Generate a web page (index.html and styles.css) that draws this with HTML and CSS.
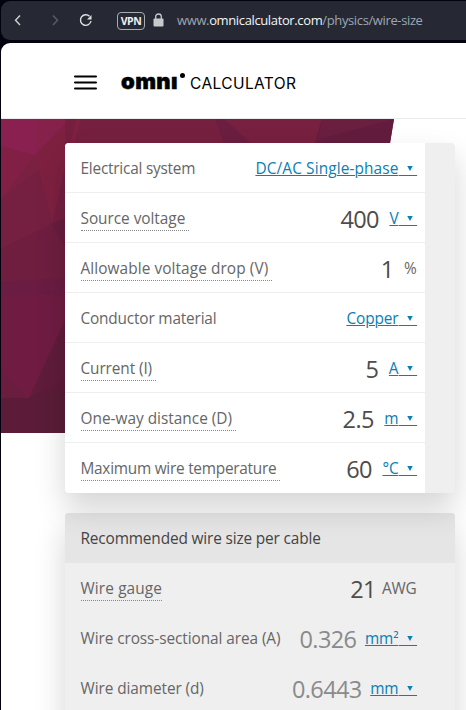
FILE: index.html
```
<!DOCTYPE html>
<html lang="en">
<head>
<meta charset="utf-8">
<title>Wire Size Calculator</title>
<link rel="stylesheet" href="styles.css">
</head>
<body>
<svg class="defs" width="0" height="0"><symbol id="caret" viewBox="0 0 18 10"><path d="M8 -.5h6L11 5z"/><path d="M0 9h18v1H0z"/></symbol></svg>
<div class="toolbar">
  <svg class="nav" width="100" height="39" viewBox="0 0 100 39" fill="none">
    <path d="M19 14.500l-4.500 4.800 4.500 4.800" stroke="#d0d1d4" stroke-width="1.400"/>
    <path d="M52 14.500l4.500 4.800-4.500 4.800" stroke="#5b5d67" stroke-width="1.400"/>
    <path d="M88.500 15.300a5.300 5.300 0 1 0 1.500 4.700" stroke="#e0e1e3" stroke-width="1.400"/>
    <path d="M90.500 14v4.500H86z" fill="#e0e1e3"/>
  </svg>
  <span class="vpn">VPN</span>
  <svg class="lock" width="11" height="14" viewBox="0 0 11 14"><path d="M2.700 6V3.800a2.800 2.800 0 0 1 5.600 0V6" fill="none" stroke="#c6cacd" stroke-width="1.300"/><rect x=".5" y="5.500" width="10" height="8" rx="1" fill="#c6cacd"/></svg>
  <span class="url">www.<b>omnicalculator.com</b>/physics/wire-size</span>
</div>
<div class="page">
  <header class="header">
    <svg class="menu" width="23" height="15" viewBox="0 0 23 15"><path d="M1 1.500h21M1 7.500h21M1 13.500h21" stroke="#000" stroke-width="2" stroke-linecap="round"/></svg>
    <span class="omni">omnı</span><i class="dot"></i><span class="calc">CALCULATOR</span>
  </header>
  <main class="main">
    <svg class="hero" width="394" height="314" viewBox="0 0 394 314">
      <path fill="#741e40" d="M0 0H393L341 314H0z"/>
      <path fill="#812044" d="M0 0H80L52 108 0 80z"/>
      <path fill="#8a204f" d="M0 0H36L34 36 0 27z"/>
      <path fill="#86214b" d="M36 0H68L34 36z"/>
      <path fill="#7a2041" d="M34 36L0 80V130L50 104z"/>
      <path fill="#7e2040" d="M34 36L70 0H80L51 105z"/>
      <path fill="#762041" d="M0 80L38 50 51 105 0 130z"/>
      <path fill="#6f1e40" d="M0 130L51 105 64 120V159L0 163z"/>
      <path fill="#741e40" d="M75 0L51 105 64 99V0z"/>
      <path fill="#681d3e" d="M51 105L64 99V128z"/>
      <path fill="#6a1c42" d="M0 163L64 159V200H0z"/>
      <path fill="#701c42" d="M0 176H64V201L28 279 0 251z"/>
      <path fill="#6a1d3f" d="M0 251L28 279H0z"/>
      <path fill="#5f1c3b" d="M64 201V258L28 279z"/>
      <path fill="#5d1b3a" d="M0 279H28L64 258V314H0z"/>
      <path fill="#5a1c38" d="M28 279L64 267V314H28z"/>
      <path fill="#6b1e3f" d="M214 0H321L316 24H223z"/>
      <path fill="#75203f" d="M80 0H214L223 24H75z"/>
      <path fill="#77203f" d="M223 0H321L316 24H250z"/>
      <path fill="#631c3e" d="M321 0H393L389 24H314z"/>
      <path fill="#6a1e40" d="M321 0H393L316 21z"/>
    </svg>
    <section class="card inputs">
      <div class="rows">
        <div class="row"><span class="label">Electrical system</span><a class="unit sys">DC/AC Single-phase<svg class="caret"><use href="#caret"/></svg></a></div>
        <div class="row"><span class="label tip">Source voltage</span><span class="num">400</span><a class="unit">V<svg class="caret"><use href="#caret"/></svg></a></div>
        <div class="row"><span class="label tip">Allowable voltage drop (V)</span><span class="num wide">1</span><span class="plain">%</span></div>
        <div class="row"><span class="label">Conductor material</span><a class="unit">Copper<svg class="caret"><use href="#caret"/></svg></a></div>
        <div class="row"><span class="label tip">Current (I)</span><span class="num">5</span><a class="unit">A<svg class="caret"><use href="#caret"/></svg></a></div>
        <div class="row"><span class="label tip">One-way distance (D)</span><span class="num">2.5</span><a class="unit">m<svg class="caret"><use href="#caret"/></svg></a></div>
        <div class="row"><span class="label tip">Maximum wire temperature</span><span class="num">60</span><a class="unit">°C<svg class="caret"><use href="#caret"/></svg></a></div>
      </div>
    </section>
    <section class="card results">
      <h2 class="title">Recommended wire size per cable</h2>
      <div class="rows">
        <div class="row"><span class="label tip snug">Wire gauge</span><span class="num mid">21</span><span class="plain">AWG</span></div>
        <div class="row"><span class="label">Wire cross-sectional area (A)</span><span class="num dim">0.326</span><a class="unit">mm²<svg class="caret"><use href="#caret"/></svg></a></div>
        <div class="row"><span class="label">Wire diameter (d)</span><span class="num dim">0.6443</span><a class="unit">mm<svg class="caret"><use href="#caret"/></svg></a></div>
      </div>
    </section>
  </main>
</div>
</body>
</html>
```
FILE: styles.css
```
* { box-sizing: border-box; }
body { margin: 0; width: 466px; height: 710px; overflow: hidden; background: #03030f; padding: 1px 0 0 1px; font: 15.4px "Open Sans", "Noto Sans", sans-serif; color: #666; }
.defs { position: absolute; }
.toolbar { height: 39px; background: #262933; border-radius: 9px 0 0 9px; display: flex; align-items: center; }
.nav { flex: none; }
.vpn { margin-left: 16px; width: 28px; height: 18px; border: 1.5px solid #a9abb1; border-radius: 4px; color: #f0f0f2; font: 700 10.5px/16px "Open Sans", sans-serif; display: flex; justify-content: center; letter-spacing: -.5px; }
.lock { margin: 0 13px 2px 8px; }
.url { color: #9ba7b4; font-size: 13px; white-space: nowrap; letter-spacing: -.37px; margin-top: -1px; }
.url b { font-weight: 400; color: #f3f5f7; }
.page { margin-top: 3px; height: 667px; background: #fff; border-radius: 9px 0 0 0; overflow: hidden; }
.header { height: 76px; border-bottom: 1px solid #ebebeb; padding: 4px 0 0 73px; display: flex; align-items: center; color: #000; }
.menu { margin-left: -.5px; }
.omni { margin: -4px 0 0 24.5px; font: 900 22px/30px Inter, sans-serif; width: 58.5px; white-space: nowrap; letter-spacing: .4px; -webkit-text-stroke: .5px #000; }
.dot { width: 5px; height: 5px; border-radius: 50%; background: #000; margin: -15px 5px 0 .5px; }
.calc { font: 15.500px/20px Inter, sans-serif; margin-top: 3px; letter-spacing: .4px; }
.main { display: grid; grid-template-columns: 64px 390px 11px; }
.hero { grid-area: 1 / 1 / 3 / 4; }
.card { grid-column: 2; border-radius: 4px; background: #efefef; box-shadow: 0 15px 30px rgba(0,0,0,.17); }
.inputs { grid-row: 1; margin-top: 24px; height: 350px; z-index: 2; }
.results { grid-row: 2; margin-top: 20px; height: 250px; z-index: 1; }
.rows { width: 360px; }
.inputs .rows { background: #fff; border-radius: 4px 0 0 4px; }
.row { height: 50px; padding: 16px 8.500px 0 15.500px; display: flex; align-items: flex-start; white-space: nowrap; line-height: 20px; }
.inputs .row:not(:last-child) { border-bottom: 1px solid #eee; }
.label { margin-right: auto; letter-spacing: -.08px; }
.tip { height: 22px; padding-right: 4px; border-bottom: 1px dotted #888; }
.snug { padding-right: 0; }
.inputs .row:nth-child(1) .label { letter-spacing: -.23px; }
.inputs .row:nth-child(2) .label { letter-spacing: -.04px; }
.inputs .row:nth-child(3) .label { letter-spacing: .08px; }
.inputs .row:nth-child(4) .label { letter-spacing: -.18px; }
.inputs .row:nth-child(5) .label { letter-spacing: -.1px; }
.inputs .row:nth-child(6) .label { letter-spacing: 0; }
.inputs .row:nth-child(7) .label { letter-spacing: -.26px; }
.results .row:nth-child(1) .label { letter-spacing: .12px; }
.unit { color: #0880b4; text-decoration: underline; text-decoration-thickness: 1px; text-underline-offset: 1px; letter-spacing: -.1px; }
.inputs .sys { letter-spacing: .12px; }
.caret { width: 18px; height: 10px; fill: #0880b4; vertical-align: -2px; overflow: visible; }
.plain { letter-spacing: -.2px; }
.num { font-size: 23.500px; line-height: 20px; margin: 0 10.500px 0 0; color: #4c4c4c; letter-spacing: -.6px; }
.wide { margin-right: 10.500px; }
.mid { margin-right: 6px; }
.dim { color: #8a8a8a; margin-right: 8.500px; }
.title { margin: 0; height: 50px; padding: 0 15.500px; background: #e5e5e5; border-radius: 4px 4px 0 0; font-size: 15.400px; font-weight: 400; line-height: 52px; color: #444; letter-spacing: -.15px; }
```
